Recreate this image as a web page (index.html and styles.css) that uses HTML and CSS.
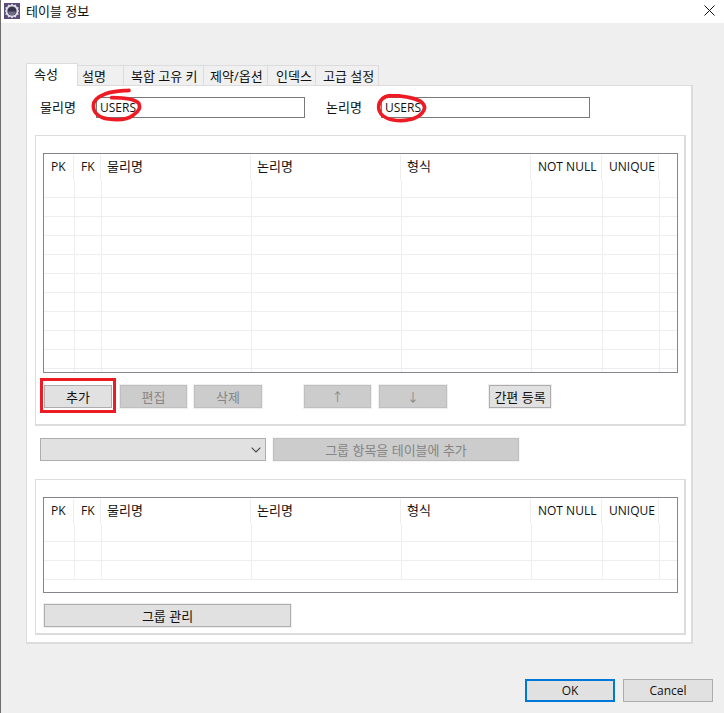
FILE: index.html
```html
<!DOCTYPE html>
<html lang="ko">
<head>
<meta charset="utf-8">
<title>테이블 정보</title>
<link rel="stylesheet" href="styles.css">
</head>
<body>
<div class="window">
  <header class="titlebar">
    <svg class="app-icon" viewBox="0 0 16 16" width="16" height="16" aria-hidden="true">
      <rect width="16" height="16" fill="#5b4a78"/>
      <path d="M8 .6l1.6 1.7 2.2-.7.7 2.2 2.2.7-.7 2.2L15.4 8l-1.4 1.3.7 2.2-2.2.7-.7 2.2-2.2-.7L8 15.4l-1.6-1.7-2.2.7-.7-2.2-2.2-.7.7-2.2L.6 8l1.4-1.3-.7-2.2 2.2-.7.7-2.2 2.2.7z" fill="#dcdce2"/>
      <circle cx="8" cy="8" r="4.6" fill="#35324c"/>
      <path d="M4.2 8.4h7.6a3.8 3.8 0 0 1-7.6 0z" fill="#6f6c88"/>
    </svg>
    <span class="title">테이블 정보</span>
    <svg class="close" viewBox="0 0 11 11" width="11" height="11" aria-hidden="true">
      <path d="M.5.5l10 10M10.5.5l-10 10" stroke="#111" stroke-width="1" fill="none"/>
    </svg>
  </header>

  <main class="content">
    <nav class="tabs">
      <span class="tab tab-active tab-a">속성</span>
      <span class="tab tab-b">설명</span>
      <span class="tab tab-c">복합 고유 키</span>
      <span class="tab tab-d">제약/옵션</span>
      <span class="tab tab-e">인덱스</span>
      <span class="tab tab-f">고급 설정</span>
    </nav>

    <section class="panel">
      <div class="fields">
        <label class="field-label label-phys">물리명</label>
        <div class="input input-phys">USERS
          <svg class="scribble" viewBox="0 0 210 135" aria-hidden="true">
            <path d="M132 16C110 18 85 18 62 26C38 35 25 48 25 62C25 85 45 98 70 102C95 106 125 106 145 90C160 80 168 70 162 56C150 42 115 38 80 38"/>
          </svg>
        </div>
        <label class="field-label label-log">논리명</label>
        <div class="input input-log">USERS
          <svg class="scribble" viewBox="0 0 210 135" aria-hidden="true">
            <path d="M60 32C40 34 26 48 26 65C26 85 42 100 70 105C100 110 135 104 152 88C168 74 168 60 150 48C125 36 90 32 60 32"/>
          </svg>
        </div>
      </div>

      <section class="group group-main">
        <div class="grid grid-main">
          <div class="row head">
            <span class="cell c1">PK</span><span class="cell c2">FK</span><span class="cell c3">물리명</span><span class="cell c4">논리명</span><span class="cell c5">형식</span><span class="cell c6">NOT NULL</span><span class="cell c7">UNIQUE</span>
          </div>
          <div class="row body first"><i class="cell c1"></i><i class="cell c2"></i><i class="cell c3"></i><i class="cell c4"></i><i class="cell c5"></i><i class="cell c6"></i><i class="cell c7"></i></div>
          <div class="row body"><i class="cell c1"></i><i class="cell c2"></i><i class="cell c3"></i><i class="cell c4"></i><i class="cell c5"></i><i class="cell c6"></i><i class="cell c7"></i></div>
          <div class="row body"><i class="cell c1"></i><i class="cell c2"></i><i class="cell c3"></i><i class="cell c4"></i><i class="cell c5"></i><i class="cell c6"></i><i class="cell c7"></i></div>
          <div class="row body"><i class="cell c1"></i><i class="cell c2"></i><i class="cell c3"></i><i class="cell c4"></i><i class="cell c5"></i><i class="cell c6"></i><i class="cell c7"></i></div>
          <div class="row body"><i class="cell c1"></i><i class="cell c2"></i><i class="cell c3"></i><i class="cell c4"></i><i class="cell c5"></i><i class="cell c6"></i><i class="cell c7"></i></div>
          <div class="row body"><i class="cell c1"></i><i class="cell c2"></i><i class="cell c3"></i><i class="cell c4"></i><i class="cell c5"></i><i class="cell c6"></i><i class="cell c7"></i></div>
          <div class="row body"><i class="cell c1"></i><i class="cell c2"></i><i class="cell c3"></i><i class="cell c4"></i><i class="cell c5"></i><i class="cell c6"></i><i class="cell c7"></i></div>
          <div class="row body"><i class="cell c1"></i><i class="cell c2"></i><i class="cell c3"></i><i class="cell c4"></i><i class="cell c5"></i><i class="cell c6"></i><i class="cell c7"></i></div>
          <div class="row body"><i class="cell c1"></i><i class="cell c2"></i><i class="cell c3"></i><i class="cell c4"></i><i class="cell c5"></i><i class="cell c6"></i><i class="cell c7"></i></div>
          <div class="row body"><i class="cell c1"></i><i class="cell c2"></i><i class="cell c3"></i><i class="cell c4"></i><i class="cell c5"></i><i class="cell c6"></i><i class="cell c7"></i></div>
          <div class="row body last"><i class="cell c1"></i><i class="cell c2"></i><i class="cell c3"></i><i class="cell c4"></i><i class="cell c5"></i><i class="cell c6"></i><i class="cell c7"></i></div>
        </div>
        <div class="actions">
          <div class="marked"><button class="btn btn-add">추가</button><span class="redbox"></span></div>
          <button class="btn off btn-edit">편집</button>
          <button class="btn off btn-del">삭제</button>
          <button class="btn off btn-up">↑</button>
          <button class="btn off btn-down">↓</button>
          <button class="btn btn-quick">간편 등록</button>
        </div>
      </section>

      <div class="group-picker">
        <div class="combo">
          <svg viewBox="0 0 10 6" width="10" height="6" aria-hidden="true"><path d="M.7.7L5 5l4.3-4.3" fill="none" stroke="#444" stroke-width="1.1"/></svg>
        </div>
        <button class="btn off btn-group-add">그룹 항목을 테이블에 추가</button>
      </div>

      <section class="group group-second">
        <div class="grid grid-second">
          <div class="row head">
            <span class="cell c1">PK</span><span class="cell c2">FK</span><span class="cell c3">물리명</span><span class="cell c4">논리명</span><span class="cell c5">형식</span><span class="cell c6">NOT NULL</span><span class="cell c7">UNIQUE</span>
          </div>
          <div class="row body first"><i class="cell c1"></i><i class="cell c2"></i><i class="cell c3"></i><i class="cell c4"></i><i class="cell c5"></i><i class="cell c6"></i><i class="cell c7"></i></div>
          <div class="row body"><i class="cell c1"></i><i class="cell c2"></i><i class="cell c3"></i><i class="cell c4"></i><i class="cell c5"></i><i class="cell c6"></i><i class="cell c7"></i></div>
          <div class="row body last"><i class="cell c1"></i><i class="cell c2"></i><i class="cell c3"></i><i class="cell c4"></i><i class="cell c5"></i><i class="cell c6"></i><i class="cell c7"></i></div>
        </div>
        <button class="btn btn-manage">그룹 관리</button>
      </section>
    </section>

    <footer class="dialog-actions">
      <button class="btn btn-ok">OK</button>
      <button class="btn btn-cancel">Cancel</button>
    </footer>
  </main>
</div>
</body>
</html>
```

FILE: styles.css
```css
* { box-sizing: border-box; }

html, body {
  margin: 0;
  height: 100%;
  overflow: hidden;
}

body {
  font-family: "Open Sans", "Noto Sans CJK KR", sans-serif;
  font-size: 12px;
  color: #111;
  background: #efefef;
}

.window {
  width: 724px;
  height: 713px;
  border-left: 1px solid #6e6e6e;
  display: flex;
  flex-direction: column;
}

.titlebar {
  height: 23px;
  background: #fff;
  display: flex;
  align-items: center;
  padding: 0 8px 0 3px;
  flex: none;
}

.app-icon { margin-right: 6px; margin-top: -2px; }

.title { flex: 1; margin-top: -3px; font-size: 13px; }

.close { margin-right: 1px; margin-top: -3px; }

.content { flex: 1; padding: 40px 0 0 25px; }

.tabs {
  display: flex;
  align-items: flex-end;
  height: 22px;
  position: relative;
  z-index: 1;
}

.tab {
  height: 20px;
  line-height: 20px;
  font-size: 13px;
  border: 1px solid #dcdcdc;
  border-bottom: 0;
  border-left: 0;
  background: #f0f0f0;
  white-space: nowrap;
}

.tab-active {
  height: 23px;
  line-height: 21px;
  margin-bottom: -1px;
  background: #fff;
  border-left: 1px solid #dcdcdc;
}

.tab-a { width: 52px; padding-left: 7px; }
.tab-b { width: 46px; padding-left: 4px; }
.tab-c { width: 80px; padding-left: 7px; }
.tab-d { width: 64px; padding-left: 6px; }
.tab-e { width: 48px; padding-left: 8px; }
.tab-f { width: 63px; padding-left: 7px; }

.panel {
  width: 667px;
  height: 559px;
  background: #fff;
  border: 2px solid #dcdcdc;
  border-width: 1px 2px 2px 1px;
  padding: 11px 7px 0 8px;
}

.fields {
  display: flex;
  align-items: center;
  height: 21px;
}

.field-label { margin-top: -2px; font-size: 13px; }

.label-phys { margin-left: 5px; width: 56px; }

.input {
  position: relative;
  height: 21px;
  border: 1px solid #7a7a7a;
  line-height: 19px;
  padding-left: 3px;
  background: #fff;
}

.input-phys { width: 209px; }

.label-log { margin-left: 21px; width: 55px; }

.input-log { width: 209px; }

.scribble {
  position: absolute;
  left: -12px;
  top: -13px;
  width: 70px;
  height: 45px;
  overflow: visible;
}

.scribble path {
  fill: none;
  stroke: #ed1c24;
  stroke-width: 11;
  stroke-linecap: round;
  stroke-linejoin: round;
}

.group {
  background: #fff;
  border: 2px solid #dcdcdc;
  border-width: 1px 2px 2px 1px;
  padding: 17px 7px 0 7px;
  width: 651px;
}

.group-main { height: 291px; margin-top: 17px; }

.group-second { height: 156px; margin-top: 17px; }

.grid {
  border: 1px solid #85858c;
  width: 635px;
  overflow: hidden;
  padding-top: 1px;
}

.grid-main { height: 220px; }

.grid-second { height: 96px; }

.row { display: flex; }

.head { height: 25px; line-height: 23px; }

.body {
  height: 19px;
  padding-left: 1px;
  border-bottom: 1px solid #eeeeee;
}

.body.first { height: 18px; }

.cell {
  display: block;
  flex: none;
  border-right: 1px solid #eeeeee;
  white-space: nowrap;
}

.head .cell { padding-left: 7px; }

.c1 { width: 30px; }
.c2 { width: 27px; }
.c3 { width: 150px; }
.c4 { width: 150px; }
.c5 { width: 130px; }
.c6 { width: 71px; }
.c7 { width: 57px; }

.head .c2 { padding-left: 7px; }
.head .c3, .head .c4, .head .c5 { padding-left: 6px; font-size: 13px; }

.btn {
  font: inherit;
  font-size: 13px;
  color: #111;
  height: 23px;
  padding: 0;
  background: #e1e1e1;
  border: 1px solid #adadad;
  outline: 1px solid #efefef;
  white-space: nowrap;
}

.btn.off {
  background: #cccccc;
  border-color: #bfbfbf;
  color: #858585;
}

.actions {
  display: flex;
  align-items: flex-start;
  margin: 12px 0 0 1px;
}

.marked { position: relative; width: 68px; height: 23px; }

.btn-add { width: 68px; display: block; outline: 0; }

.redbox {
  position: absolute;
  left: -4px;
  top: -7px;
  width: 76px;
  height: 35px;
  border: 3px solid #ed1c24;
}

.btn-edit { width: 67px; margin-left: 8px; }
.btn-del { width: 68px; margin-left: 7px; }
.btn-up { width: 67px; margin-left: 42px; font-size: 12px; }
.btn-down { width: 68px; margin-left: 8px; font-size: 12px; }
.btn-quick { width: 62px; margin-left: 42px; }

.group-picker {
  display: flex;
  align-items: flex-start;
  margin: 12px 0 0 5px;
  height: 24px;
}

.combo {
  width: 226px;
  height: 23px;
  background: #e1e1e1;
  border: 1px solid #adadad;
  display: flex;
  align-items: center;
  justify-content: flex-end;
  padding-right: 4px;
}

.btn-group-add { width: 246px; height: 23px; margin-left: 7px; outline-color: #f5f5f5; }

.btn-manage { width: 247px; margin: 11px 0 0 1px; }

.dialog-actions {
  display: flex;
  gap: 8px;
  margin: 35px 0 0 499px;
}

.btn-ok, .btn-cancel { width: 90px; height: 23px; outline: 0; font-size: 12px; }

.btn-ok { border: 2px solid #0078d7; }
```
